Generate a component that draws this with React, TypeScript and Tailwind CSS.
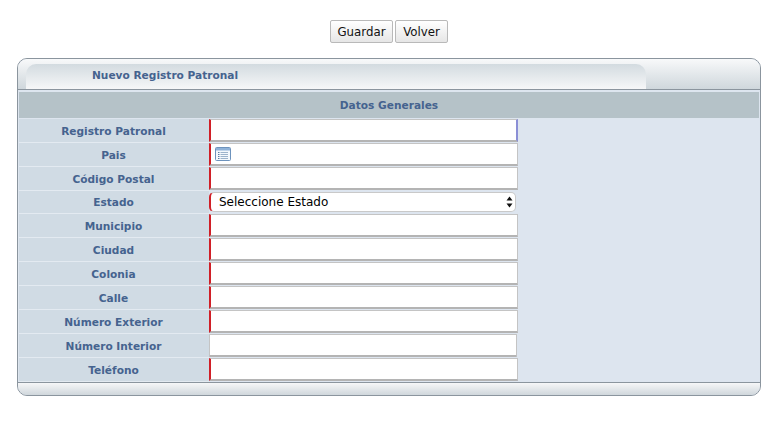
import React from 'react';

const labelFont = "font-['DejaVu_Sans',sans-serif] text-[10.6px] font-bold text-[#45638f]";

const rows = [
  { label: 'Registro Patronal', focus: true },
  { label: 'Pais', calendar: true },
  { label: 'Código Postal' },
  { label: 'Estado', select: true },
  { label: 'Municipio' },
  { label: 'Ciudad' },
  { label: 'Colonia' },
  { label: 'Calle' },
  { label: 'Número Exterior' },
  { label: 'Número Interior', optional: true },
  { label: 'Teléfono' },
];

type Row = (typeof rows)[number] & { focus?: boolean; calendar?: boolean; select?: boolean; optional?: boolean };

const CalendarIcon = () => (
  <svg width="16" height="14" viewBox="0 0 16 14" className="ml-[4px] shrink-0">
    <rect x="0.5" y="0.5" width="15" height="13" rx="1" fill="#f4f8fc" stroke="#6d93bd" />
    <rect x="1" y="1" width="14" height="2.5" fill="#8fb2d8" />
    <path d="M3 5.5h1.5M3 7.5h1.5M3 9.5h1.5M3 11.5h1.5" stroke="#5b7fa8" />
    <path d="M5.5 5.5h7.5M5.5 7.5h7.5M5.5 9.5h7.5M5.5 11.5h7.5" stroke="#9db3cb" />
  </svg>
);

const Field = ({ row }: { row: Row }) => {
  if (row.select) {
    return (
      <div className="mt-[1px] flex h-[20px] w-[307px] items-center justify-between self-start rounded-[5px] border border-[#c9c9c9] border-l-2 border-l-[#d01f27] bg-white pl-[8px] pr-[2px] font-['DejaVu_Sans',sans-serif] text-[12px] text-black">
        <span>Seleccione Estado</span>
        <svg width="7" height="12" viewBox="0 0 7 12">
          <path d="M3.5 0.5L6.5 4.5H0.5z M3.5 11.5L0.5 7.5H6.5z" fill="#111" />
        </svg>
      </div>
    );
  }
  return (
    <div
      className={`flex h-[23px] items-center self-start border border-[#c4c4c4] border-b-2 border-b-[#b4b4b4] bg-white ${
        row.optional ? 'w-[308px] rounded-[1px]' : 'w-[309px] border-l-2 border-l-[#d01f27]'
      } ${row.focus ? 'border-r-2 border-r-[#8b8fd6]' : ''}`}
    >
      {row.calendar && <CalendarIcon />}
    </div>
  );
};

export default function App() {
  return (
    <div className="h-[429px] w-[782px] overflow-hidden bg-white">
      <div className="flex h-[58px] items-start justify-center gap-[2px] pr-[4px] pt-[20px] font-['DejaVu_Sans',sans-serif] text-[11.8px] text-[#111]">
        <button className="h-[23px] w-[63px] rounded-[2px] border border-[#b9b9b9] bg-gradient-to-b from-white to-[#e6e6e6] pt-[2px]">
          Guardar
        </button>
        <button className="h-[23px] w-[53px] rounded-[2px] border border-[#b9b9b9] bg-gradient-to-b from-white to-[#e6e6e6] pt-[2px]">
          Volver
        </button>
      </div>

      <div className="ml-[17px] w-[744px] rounded-[10px] border border-[#8b959e] bg-[#dde5ef]">
        <div className="flex h-[31px] items-end overflow-hidden rounded-t-[9px] border-b border-[#8b959e] bg-gradient-to-b from-[#f8f9fa] to-[#cfd7dc] pl-[8px]">
          <div className={`flex h-[25px] w-[620px] items-center rounded-tl-[10px] rounded-tr-[10px] bg-gradient-to-b from-[#d3dbe0] to-[#f6f7f8] pb-[1px] pl-[66px] ${labelFont}`}>
            Nuevo Registro Patronal
          </div>
        </div>

        <div className="px-[1px] pt-[2px]">
          <div className={`flex h-[26px] items-center justify-center bg-[#b5c2c8] pt-[2px] ${labelFont}`}>Datos Generales</div>
          <div className="pt-[1px]">
            {(rows as Row[]).map((row) => (
              <div key={row.label} className={`flex items-center ${row.select ? 'h-[23px]' : 'h-[24px]'}`}>
                <div
                  className={`flex h-full w-[190px] items-center justify-center border-b border-[#e3eaf1] bg-[#d0dbe4] pr-[1px] pt-[2px] ${labelFont}`}
                >
                  {row.label}
                </div>
                <Field row={row} />
              </div>
            ))}
          </div>
        </div>

        <div className="h-[13px] rounded-b-[9px] border-t border-[#8b959e] bg-gradient-to-b from-[#f6f7f8] to-[#d0d7dc]" />
      </div>
    </div>
  );
}
